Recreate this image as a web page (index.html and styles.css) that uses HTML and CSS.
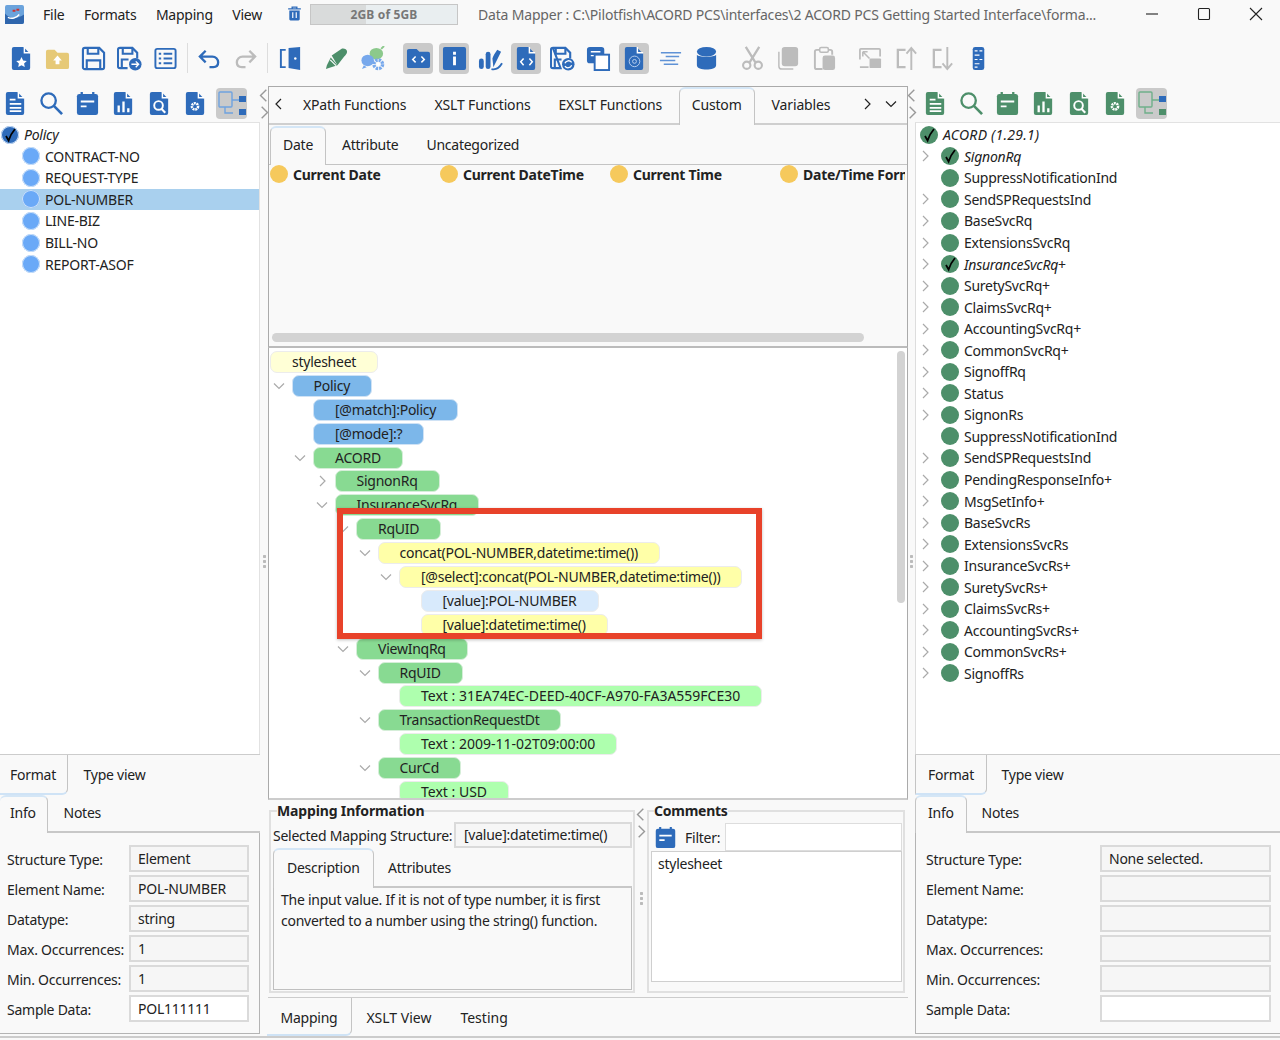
FILE: index.html
```html
<!DOCTYPE html>
<html lang="en">
<head>
    <meta charset="UTF-8">
    <title>Data Mapper</title>
    <link rel="stylesheet" href="styles.css">
</head>
<body>
    <svg class="defs" width="0" height="0">
        <symbol id="i-chev-r" viewBox="0 0 12 12"><path d="M4 1l5 5-5 5" fill="none" stroke="currentColor" stroke-width="1.2"/></symbol>
        <symbol id="i-chev-d" viewBox="0 0 12 12"><path d="M1 3.500l5 5 5-5" fill="none" stroke="currentColor" stroke-width="1.2"/></symbol>
        <symbol id="i-chev-l" viewBox="0 0 12 12"><path d="M8 1L3 6l5 5" fill="none" stroke="currentColor" stroke-width="1.2"/></symbol>
        <symbol id="i-check" viewBox="0 0 18 18"><path d="M5 10l2.600 4.500C9 10 11 6.500 14 3" fill="none" stroke="#000" stroke-width="1.800"/></symbol>

        <symbol id="i-file-star" viewBox="0 0 26 26"><path d="M5 1h10l7 7v15a2 2 0 0 1-2 2H5a2 2 0 0 1-2-2V3a2 2 0 0 1 2-2z" fill="currentColor"/><path d="M16 1v6h6" fill="none" stroke="#fff" stroke-width="1.500"/><path d="M13 11.500l1.700 3.500 3.800.5-2.800 2.600.7 3.800-3.400-1.800-3.400 1.800.7-3.800-2.800-2.600 3.800-.5z" fill="#fff"/></symbol>
        <symbol id="i-folder-up" viewBox="0 0 26 26"><path d="M1 6a2 2 0 0 1 2-2h7l3 3h10a2 2 0 0 1 2 2v13a2 2 0 0 1-2 2H3a2 2 0 0 1-2-2z" fill="#e6c977"/><path d="M13 10l4.500 5H15v4h-4v-4H8.500z" fill="#fff"/></symbol>
        <symbol id="i-save" viewBox="0 0 26 26"><path d="M4 2h15l5 5v15a2 2 0 0 1-2 2H4a2 2 0 0 1-2-2V4a2 2 0 0 1 2-2z" fill="none" stroke="currentColor" stroke-width="2.200"/><path d="M7 2v6h11V2M6 24v-9h14v9" fill="none" stroke="currentColor" stroke-width="2.200"/></symbol>
        <symbol id="i-save-as" viewBox="0 0 26 26"><path d="M3 2h13l5 5v6M11 23H3a2 2 0 0 1-2-2V4a2 2 0 0 1 2-2" fill="none" stroke="currentColor" stroke-width="2.200"/><path d="M6 2v6h10V2M5 23v-9h7" fill="none" stroke="currentColor" stroke-width="2.200"/><circle cx="19" cy="19" r="6.500" fill="currentColor"/><path d="M15 19h7M19.500 16l3 3-3 3" fill="none" stroke="#fff" stroke-width="1.400"/></symbol>
        <symbol id="i-save-sync" viewBox="0 0 26 26"><path d="M3 2h13l5 5v6M11 23H3a2 2 0 0 1-2-2V4a2 2 0 0 1 2-2z" fill="none" stroke="currentColor" stroke-width="2.200"/><path d="M6 2v6h10V2M5 23v-9h7" fill="none" stroke="currentColor" stroke-width="2.200"/><circle cx="19" cy="19" r="6.500" fill="currentColor"/><path d="M15.500 18a4 4 0 0 1 7-1M22.500 20a4 4 0 0 1-7 1" fill="none" stroke="#fff" stroke-width="1.300"/></symbol>
        <symbol id="i-list" viewBox="0 0 26 26"><rect x="2.500" y="3" width="21" height="20" rx="2" fill="none" stroke="currentColor" stroke-width="2"/><path d="M6 8h2.500M11 8h9M6 13h2.500M11 13h9M6 18h2.500M11 18h9" stroke="currentColor" stroke-width="2.200"/></symbol>
        <symbol id="i-undo" viewBox="0 0 26 26"><path d="M9 5L3 11l6 6M3 11h13a6 6 0 0 1 6 6c0 3-2 5-5 5h-4" fill="none" stroke="currentColor" stroke-width="2.400"/></symbol>
        <symbol id="i-redo" viewBox="0 0 26 26"><path d="M17 5l6 6-6 6M23 11H10a6 6 0 0 0-6 6c0 3 2 5 5 5h4" fill="none" stroke="currentColor" stroke-width="2.400"/></symbol>
        <symbol id="i-door" viewBox="0 0 26 26"><path d="M11 2l12-1v24l-12-2z" fill="currentColor"/><circle cx="18" cy="13" r="1.300" fill="#fff"/><path d="M8 4H3v18h5" fill="none" stroke="currentColor" stroke-width="2"/></symbol>
        <symbol id="i-pen" viewBox="0 0 26 26"><path d="M8 10L18 3c2-1 6 0 6 3 0 2-2 4-3 5l-7 9z" fill="#4d8f6a"/><path d="M7 12l7 8-9 3-3 1 1-4z" fill="#4d8f6a"/><path d="M6.500 14.500l6 6" stroke="#fff" stroke-width="1.200"/></symbol>
        <symbol id="i-group" viewBox="0 0 26 26"><ellipse cx="17" cy="8" rx="7" ry="6" fill="#8cc98c"/><path d="M22 3l3-3" stroke="#8cc98c" stroke-width="2"/><ellipse cx="8" cy="15" rx="6.500" ry="6" fill="#77a8ec"/><path d="M4 20l-2 4 5-2z" fill="#77a8ec"/><circle cx="19" cy="19" r="4.500" fill="none" stroke="#77a8ec" stroke-width="3.500" stroke-dasharray="2.500 1"/><circle cx="19" cy="19" r="1.500" fill="#fff"/></symbol>
        <symbol id="i-folder-code" viewBox="0 0 26 26"><path d="M1 5a2 2 0 0 1 2-2h8l3 3h9a2 2 0 0 1 2 2v13a2 2 0 0 1-2 2H3a2 2 0 0 1-2-2z" fill="currentColor"/><path d="M10 11l-3 3 3 3M16 11l3 3-3 3" fill="none" stroke="#fff" stroke-width="1.600"/></symbol>
        <symbol id="i-info" viewBox="0 0 26 26"><rect x="1" y="1" width="24" height="24" rx="2" fill="currentColor"/><path d="M11.500 6h3v3h-3zM11.500 11h3v9h-3z" fill="#fff"/></symbol>
        <symbol id="i-hand-chart" viewBox="0 0 26 26"><rect x="1" y="13" width="5" height="11" rx="2.500" fill="currentColor"/><rect x="8" y="6" width="5" height="18" rx="2.500" fill="currentColor"/><path d="M16 22L24 6l-4-2c-2 3-4 6-5 9z" fill="currentColor"/><path d="M14 24c4 1 8-1 11-6" fill="none" stroke="currentColor" stroke-width="2"/></symbol>
        <symbol id="i-file-code" viewBox="0 0 26 26"><path d="M5 1h10l7 7v15a2 2 0 0 1-2 2H5a2 2 0 0 1-2-2V3a2 2 0 0 1 2-2z" fill="currentColor"/><path d="M16 1v6h6" fill="none" stroke="#fff" stroke-width="1.500"/><path d="M10 13l-3 3.500 3 3.500M16 13l3 3.500-3 3.500" fill="none" stroke="#fff" stroke-width="1.600"/></symbol>
        <symbol id="i-copies" viewBox="0 0 26 26"><rect x="1" y="1" width="18" height="17" rx="3" fill="currentColor"/><path d="M5 6h10M5 10h7" stroke="#fff" stroke-width="1.500"/><rect x="9" y="9" width="15" height="16" fill="#fff" stroke="currentColor" stroke-width="2"/></symbol>
        <symbol id="i-file-at" viewBox="0 0 26 26"><path d="M5 1h10l7 7v15a2 2 0 0 1-2 2H5a2 2 0 0 1-2-2V3a2 2 0 0 1 2-2z" fill="currentColor"/><path d="M16 1v6h6" fill="none" stroke="#fff" stroke-width="1.500"/><circle cx="13" cy="16" r="5.500" fill="none" stroke="#b8cfee" stroke-width="1"/><circle cx="13" cy="16" r="2" fill="none" stroke="#b8cfee" stroke-width="1"/></symbol>
        <symbol id="i-lines" viewBox="0 0 26 26"><path d="M3 7h21M8 11h14M2 15h16M6 19h15" stroke="#5f92d6" stroke-width="1.500"/></symbol>
        <symbol id="i-db" viewBox="0 0 26 26"><ellipse cx="13" cy="6" rx="10" ry="5" fill="currentColor"/><path d="M3 9c2 3 18 3 20 0v11c0 6-20 6-20 0z" fill="currentColor"/></symbol>
        <symbol id="i-scissors" viewBox="0 0 26 26"><path d="M6 1l10 16M20 1L10 17" stroke="currentColor" stroke-width="2.400"/><circle cx="7" cy="20" r="3.800" fill="none" stroke="currentColor" stroke-width="2.200"/><circle cx="19" cy="20" r="3.800" fill="none" stroke="currentColor" stroke-width="2.200"/></symbol>
        <symbol id="i-copy" viewBox="0 0 26 26"><path d="M3 6v15a3 3 0 0 0 3 3h12" fill="none" stroke="currentColor" stroke-width="1.500"/><rect x="6" y="1" width="17" height="20" rx="3" fill="currentColor"/></symbol>
        <symbol id="i-paste" viewBox="0 0 26 26"><path d="M8 4H5a2 2 0 0 0-2 2v16a2 2 0 0 0 2 2h6" fill="none" stroke="currentColor" stroke-width="2"/><path d="M17 4h2a2 2 0 0 1 2 2v3" fill="none" stroke="currentColor" stroke-width="2"/><rect x="8" y="1.500" width="9" height="5" rx="1.500" fill="none" stroke="currentColor" stroke-width="1.600"/><rect x="11" y="10" width="13" height="15" rx="2.500" fill="currentColor"/></symbol>
        <symbol id="i-resize" viewBox="0 0 26 26"><path d="M2 14V4a1 1 0 0 1 1-1h19a1 1 0 0 1 1 1v7M2 22h9" fill="none" stroke="currentColor" stroke-width="1.800"/><rect x="12" y="13" width="12" height="10" rx="1" fill="currentColor"/><path d="M5 6l7 7M5 6h5M5 6v5" fill="none" stroke="currentColor" stroke-width="1.600"/></symbol>
        <symbol id="i-up" viewBox="0 0 26 26"><path d="M12 4H4v18h8" fill="none" stroke="currentColor" stroke-width="2.400"/><path d="M18 25V3M13 8l5-6 5 6" fill="none" stroke="currentColor" stroke-width="2"/></symbol>
        <symbol id="i-down" viewBox="0 0 26 26"><path d="M12 4H4v18h8" fill="none" stroke="currentColor" stroke-width="2.400"/><path d="M18 1v22M13 18l5 6 5-6" fill="none" stroke="currentColor" stroke-width="2"/></symbol>
        <symbol id="i-ruler" viewBox="0 0 26 26"><rect x="7" y="1" width="12" height="24" rx="2.500" fill="currentColor"/><path d="M9 5h3M14 5h3M9 9.500h5M9 14h3M14 14h3M9 18.500h5M9 22h3" stroke="#fff" stroke-width="1.200"/></symbol>
        <symbol id="i-trash" viewBox="0 0 26 26"><path d="M2 5h22M9 5V2h8v3" fill="none" stroke="currentColor" stroke-width="2.400"/><path d="M4 8h18v15a2 2 0 0 1-2 2H6a2 2 0 0 1-2-2z" fill="currentColor"/><path d="M10 11v10M16 11v10" stroke="#fff" stroke-width="2"/></symbol>
        <symbol id="i-logo" viewBox="0 0 20 20"><rect width="20" height="20" rx="2" fill="#6ba3dc"/><path d="M0 20V9c5 6 13 6 20 1v8a2 2 0 0 1-2 2z" fill="#2f66ad"/><path d="M3 13c4 2 9 1 12-3" fill="none" stroke="#fff" stroke-width="1.500"/><path d="M8 6h3M12 5h3" stroke="#c33" stroke-width="2"/></symbol>

        <symbol id="i-file-lines" viewBox="0 0 26 26"><path d="M5 1h10l7 7v15a2 2 0 0 1-2 2H5a2 2 0 0 1-2-2V3a2 2 0 0 1 2-2z" fill="currentColor"/><path d="M16 1v6h6" fill="none" stroke="#fff" stroke-width="1.500"/><path d="M7 9h6M7 13.500h12M7 17.500h12M7 21h12" stroke="#fff" stroke-width="1.800"/></symbol>
        <symbol id="i-search" viewBox="0 0 26 26"><circle cx="10" cy="10" r="7.500" fill="none" stroke="currentColor" stroke-width="2.400"/><path d="M15.500 15.500L24 24" stroke="currentColor" stroke-width="2.800"/></symbol>
        <symbol id="i-note" viewBox="0 0 26 26"><rect x="2" y="3" width="22" height="22" rx="2.500" fill="currentColor"/><path d="M7 1v4M19 1v4" stroke="currentColor" stroke-width="2.400"/><path d="M6 11h14M6 16h6" stroke="#fff" stroke-width="2"/></symbol>
        <symbol id="i-file-chart" viewBox="0 0 26 26"><path d="M5 1h10l7 7v15a2 2 0 0 1-2 2H5a2 2 0 0 1-2-2V3a2 2 0 0 1 2-2z" fill="currentColor"/><path d="M16 1v6h6" fill="none" stroke="#fff" stroke-width="1.500"/><path d="M8 22v-7M13 22V11M18 22v-4" stroke="#fff" stroke-width="2.400"/></symbol>
        <symbol id="i-file-search" viewBox="0 0 26 26"><path d="M5 1h10l7 7v15a2 2 0 0 1-2 2H5a2 2 0 0 1-2-2V3a2 2 0 0 1 2-2z" fill="currentColor"/><path d="M16 1v6h6" fill="none" stroke="#fff" stroke-width="1.500"/><circle cx="12" cy="15" r="4.500" fill="none" stroke="#fff" stroke-width="2"/><path d="M15 18.500l4 4" stroke="#fff" stroke-width="2.200"/></symbol>
        <symbol id="i-file-gear" viewBox="0 0 26 26"><path d="M5 1h10l7 7v15a2 2 0 0 1-2 2H5a2 2 0 0 1-2-2V3a2 2 0 0 1 2-2z" fill="currentColor"/><path d="M16 1v6h6" fill="none" stroke="#fff" stroke-width="1.500"/><circle cx="12.500" cy="16" r="3.200" fill="none" stroke="#fff" stroke-width="2.600" stroke-dasharray="2 .7"/></symbol>
        <symbol id="i-map-blue" viewBox="0 0 30 30"><rect x="2" y="4" width="13" height="15" rx="1" fill="none" stroke="#6fa3e0" stroke-width="1.400"/><path d="M8 19v6h8M15 12h8" fill="none" stroke="#6fa3e0" stroke-width="1.400"/><rect x="22" y="8" width="7" height="6" fill="#2e6bba"/><rect x="22" y="21" width="7" height="6" fill="#2e6bba"/></symbol>
        <symbol id="i-map-green" viewBox="0 0 30 30"><rect x="2" y="4" width="13" height="15" rx="1" fill="none" stroke="#6fb08a" stroke-width="1.400"/><path d="M8 19v6h8M15 12h8" fill="none" stroke="#6fb08a" stroke-width="1.400"/><rect x="22" y="8" width="7" height="6" fill="#2e6bba"/><rect x="22" y="21" width="7" height="6" fill="#4d8f6a"/></symbol>
    </svg>

    <div class="app">
        <header class="titlebar">
            <svg class="logo"><use href="#i-logo"/></svg>
            <nav class="menu">
                <span>File</span>
                <span>Formats</span>
                <span>Mapping</span>
                <span>View</span>
            </nav>
            <svg class="trash"><use href="#i-trash"/></svg>
            <div class="memory"><div class="memory-used"></div><span>2GB of 5GB</span></div>
            <div class="doc-title">Data Mapper : C:\Pilotfish\ACORD PCS\interfaces\2 ACORD PCS Getting Started Interface\forma...</div>
            <div class="win-buttons">
                <svg viewBox="0 0 14 14"><path d="M1 7h12" stroke="#222" stroke-width="1.100"/></svg>
                <svg viewBox="0 0 14 14"><rect x="1.500" y="1.500" width="11" height="11" rx="1" fill="none" stroke="#222" stroke-width="1.100"/></svg>
                <svg viewBox="0 0 14 14"><path d="M1 1l12 12M13 1L1 13" stroke="#222" stroke-width="1.100"/></svg>
            </div>
        </header>

        <div class="toolbar">
            <button class="tb"><svg><use href="#i-file-star"/></svg></button>
            <button class="tb"><svg><use href="#i-folder-up"/></svg></button>
            <button class="tb"><svg><use href="#i-save"/></svg></button>
            <button class="tb"><svg><use href="#i-save-as"/></svg></button>
            <button class="tb"><svg><use href="#i-list"/></svg></button>
            <span class="sep"></span>
            <button class="tb"><svg><use href="#i-undo"/></svg></button>
            <button class="tb off"><svg><use href="#i-redo"/></svg></button>
            <span class="sep wide"></span>
            <button class="tb"><svg><use href="#i-door"/></svg></button>
            <span class="space"></span>
            <button class="tb"><svg><use href="#i-pen"/></svg></button>
            <button class="tb"><svg><use href="#i-group"/></svg></button>
            <span class="space"></span>
            <button class="tb on"><svg><use href="#i-folder-code"/></svg></button>
            <button class="tb on"><svg><use href="#i-info"/></svg></button>
            <button class="tb"><svg><use href="#i-hand-chart"/></svg></button>
            <button class="tb on"><svg><use href="#i-file-code"/></svg></button>
            <button class="tb"><svg><use href="#i-save-sync"/></svg></button>
            <button class="tb"><svg><use href="#i-copies"/></svg></button>
            <button class="tb on"><svg><use href="#i-file-at"/></svg></button>
            <button class="tb"><svg><use href="#i-lines"/></svg></button>
            <button class="tb"><svg><use href="#i-db"/></svg></button>
            <span class="space"></span>
            <button class="tb off"><svg><use href="#i-scissors"/></svg></button>
            <button class="tb off"><svg><use href="#i-copy"/></svg></button>
            <button class="tb off"><svg><use href="#i-paste"/></svg></button>
            <span class="space"></span>
            <button class="tb off"><svg><use href="#i-resize"/></svg></button>
            <button class="tb off"><svg><use href="#i-up"/></svg></button>
            <button class="tb off"><svg><use href="#i-down"/></svg></button>
            <button class="tb"><svg><use href="#i-ruler"/></svg></button>
        </div>

        <main class="main">
            <!-- source structure -->
            <section class="side">
                <div class="pane-tools">
                    <button class="tb"><svg><use href="#i-file-lines"/></svg></button>
                    <button class="tb"><svg><use href="#i-search"/></svg></button>
                    <button class="tb"><svg><use href="#i-note"/></svg></button>
                    <button class="tb"><svg><use href="#i-file-chart"/></svg></button>
                    <button class="tb"><svg><use href="#i-file-search"/></svg></button>
                    <button class="tb"><svg><use href="#i-file-gear"/></svg></button>
                    <button class="tb on"><svg class="map"><use href="#i-map-blue"/></svg></button>
                </div>
                <ul class="struct struct-left">
                    <li class="node root"><span class="dot dark"><svg><use href="#i-check"/></svg></span><i>Policy</i></li>
                    <li class="node"><span class="dot"></span>CONTRACT-NO</li>
                    <li class="node"><span class="dot"></span>REQUEST-TYPE</li>
                    <li class="node selected"><span class="dot"></span>POL-NUMBER</li>
                    <li class="node"><span class="dot"></span>LINE-BIZ</li>
                    <li class="node"><span class="dot"></span>BILL-NO</li>
                    <li class="node"><span class="dot"></span>REPORT-ASOF</li>
                </ul>
                <div class="tabs tabs-low">
                    <span class="tab on-low">Format</span>
                    <span class="tab">Type view</span>
                </div>
                <div class="tabs tabs-info">
                    <span class="tab on">Info</span>
                    <span class="tab">Notes</span>
                </div>
                <div class="props">
                    <label>Structure Type:</label><div class="field">Element</div>
                    <label>Element Name:</label><div class="field">POL-NUMBER</div>
                    <label>Datatype:</label><div class="field">string</div>
                    <label>Max. Occurrences:</label><div class="field">1</div>
                    <label>Min. Occurrences:</label><div class="field">1</div>
                    <label>Sample Data:</label><div class="field edit">POL111111</div>
                </div>
            </section>

            <div class="gutter">
                <svg><use href="#i-chev-l"/></svg>
                <svg><use href="#i-chev-r"/></svg>
                <span class="grip"></span>
            </div>

            <!-- mapping -->
            <section class="center">
                <div class="functions">
                    <div class="tabs tabs-func">
                        <svg class="tab-arrow first"><use href="#i-chev-l"/></svg>
                        <span class="tab">XPath Functions</span>
                        <span class="tab">XSLT Functions</span>
                        <span class="tab">EXSLT Functions</span>
                        <span class="tab on">Custom</span>
                        <span class="tab">Variables</span>
                        <svg class="tab-arrow next"><use href="#i-chev-r"/></svg>
                        <svg class="tab-arrow"><use href="#i-chev-d"/></svg>
                    </div>
                    <div class="tabs tabs-sub">
                        <span class="tab on">Date</span>
                        <span class="tab">Attribute</span>
                        <span class="tab">Uncategorized</span>
                    </div>
                    <div class="func-list">
                        <div class="func"><span class="dot amber"></span>Current Date</div>
                        <div class="func"><span class="dot amber"></span>Current DateTime</div>
                        <div class="func"><span class="dot amber"></span>Current Time</div>
                        <div class="func"><span class="dot amber"></span>Date/Time Format</div>
                    </div>
                    <div class="hscroll"><div class="thumb"></div></div>
                </div>

                <div class="xslt">
                    <div class="row d0"><span class="pill cream">stylesheet</span></div>
                    <div class="row d0"><svg class="twist"><use href="#i-chev-d"/></svg><span class="pill blue">Policy</span></div>
                    <div class="row d1"><svg class="twist none"></svg><span class="pill blue">[@match]:Policy</span></div>
                    <div class="row d1"><svg class="twist none"></svg><span class="pill blue">[@mode]:?</span></div>
                    <div class="row d1"><svg class="twist"><use href="#i-chev-d"/></svg><span class="pill green">ACORD</span></div>
                    <div class="row d2"><svg class="twist"><use href="#i-chev-r"/></svg><span class="pill green">SignonRq</span></div>
                    <div class="row d2"><svg class="twist"><use href="#i-chev-d"/></svg><span class="pill green">InsuranceSvcRq</span></div>
                    <div class="row d3"><svg class="twist"><use href="#i-chev-d"/></svg><span class="pill green">RqUID</span></div>
                    <div class="row d4"><svg class="twist"><use href="#i-chev-d"/></svg><span class="pill yellow">concat(POL-NUMBER,datetime:time())</span></div>
                    <div class="row d5"><svg class="twist"><use href="#i-chev-d"/></svg><span class="pill yellow">[@select]:concat(POL-NUMBER,datetime:time())</span></div>
                    <div class="row d6"><svg class="twist none"></svg><span class="pill sky">[value]:POL-NUMBER</span></div>
                    <div class="row d6"><svg class="twist none"></svg><span class="pill yellow">[value]:datetime:time()</span></div>
                    <div class="row d3"><svg class="twist"><use href="#i-chev-d"/></svg><span class="pill green">ViewInqRq</span></div>
                    <div class="row d4"><svg class="twist"><use href="#i-chev-d"/></svg><span class="pill green">RqUID</span></div>
                    <div class="row d5"><svg class="twist none"></svg><span class="pill mint">Text : 31EA74EC-DEED-40CF-A970-FA3A559FCE30</span></div>
                    <div class="row d4"><svg class="twist"><use href="#i-chev-d"/></svg><span class="pill green">TransactionRequestDt</span></div>
                    <div class="row d5"><svg class="twist none"></svg><span class="pill mint">Text : 2009-11-02T09:00:00</span></div>
                    <div class="row d4"><svg class="twist"><use href="#i-chev-d"/></svg><span class="pill green">CurCd</span></div>
                    <div class="row d5"><svg class="twist none"></svg><span class="pill mint">Text : USD</span></div>
                    <div class="vscroll"></div>
                    <div class="highlight"></div>
                </div>

                <div class="details">
                    <fieldset class="group group-map">
                        <legend>Mapping Information</legend>
                        <div class="selected-line">
                            <label>Selected Mapping Structure:</label>
                            <div class="field">[value]:datetime:time()</div>
                        </div>
                        <div class="tabs tabs-desc">
                            <span class="tab on">Description</span>
                            <span class="tab">Attributes</span>
                        </div>
                        <div class="desc">The input value. If it is not of type number, it is first converted to a number using the string() function.</div>
                    </fieldset>
                    <div class="mini-gutter">
                        <svg><use href="#i-chev-l"/></svg>
                        <svg><use href="#i-chev-r"/></svg>
                        <span class="grip"></span>
                    </div>
                    <fieldset class="group group-notes">
                        <legend>Comments</legend>
                        <div class="filter-line">
                            <svg class="filter-icon"><use href="#i-note"/></svg>
                            <label>Filter:</label>
                            <div class="filter-input"></div>
                        </div>
                        <div class="comment-box">stylesheet</div>
                    </fieldset>
                </div>

                <div class="tabs tabs-bottom">
                    <span class="tab on-low">Mapping</span>
                    <span class="tab">XSLT View</span>
                    <span class="tab">Testing</span>
                </div>
            </section>

            <div class="gutter">
                <svg><use href="#i-chev-l"/></svg>
                <svg><use href="#i-chev-r"/></svg>
                <span class="grip"></span>
            </div>

            <!-- target structure -->
            <section class="side side-right">
                <div class="pane-tools green-tools">
                    <button class="tb"><svg><use href="#i-file-lines"/></svg></button>
                    <button class="tb"><svg><use href="#i-search"/></svg></button>
                    <button class="tb"><svg><use href="#i-note"/></svg></button>
                    <button class="tb"><svg><use href="#i-file-chart"/></svg></button>
                    <button class="tb"><svg><use href="#i-file-search"/></svg></button>
                    <button class="tb"><svg><use href="#i-file-gear"/></svg></button>
                    <button class="tb on"><svg class="map"><use href="#i-map-green"/></svg></button>
                </div>
                <ul class="struct struct-right">
                    <li class="node root"><span class="dot teal"><svg><use href="#i-check"/></svg></span><i>ACORD (1.29.1)</i></li>
                    <li class="node"><svg class="twist"><use href="#i-chev-r"/></svg><span class="dot teal"><svg><use href="#i-check"/></svg></span><i>SignonRq</i></li>
                    <li class="node"><svg class="twist none"></svg><span class="dot teal"></span>SuppressNotificationInd</li>
                    <li class="node"><svg class="twist"><use href="#i-chev-r"/></svg><span class="dot teal"></span>SendSPRequestsInd</li>
                    <li class="node"><svg class="twist"><use href="#i-chev-r"/></svg><span class="dot teal"></span>BaseSvcRq</li>
                    <li class="node"><svg class="twist"><use href="#i-chev-r"/></svg><span class="dot teal"></span>ExtensionsSvcRq</li>
                    <li class="node"><svg class="twist"><use href="#i-chev-r"/></svg><span class="dot teal"><svg><use href="#i-check"/></svg></span><i>InsuranceSvcRq</i>+</li>
                    <li class="node"><svg class="twist"><use href="#i-chev-r"/></svg><span class="dot teal"></span>SuretySvcRq+</li>
                    <li class="node"><svg class="twist"><use href="#i-chev-r"/></svg><span class="dot teal"></span>ClaimsSvcRq+</li>
                    <li class="node"><svg class="twist"><use href="#i-chev-r"/></svg><span class="dot teal"></span>AccountingSvcRq+</li>
                    <li class="node"><svg class="twist"><use href="#i-chev-r"/></svg><span class="dot teal"></span>CommonSvcRq+</li>
                    <li class="node"><svg class="twist"><use href="#i-chev-r"/></svg><span class="dot teal"></span>SignoffRq</li>
                    <li class="node"><svg class="twist"><use href="#i-chev-r"/></svg><span class="dot teal"></span>Status</li>
                    <li class="node"><svg class="twist"><use href="#i-chev-r"/></svg><span class="dot teal"></span>SignonRs</li>
                    <li class="node"><svg class="twist none"></svg><span class="dot teal"></span>SuppressNotificationInd</li>
                    <li class="node"><svg class="twist"><use href="#i-chev-r"/></svg><span class="dot teal"></span>SendSPRequestsInd</li>
                    <li class="node"><svg class="twist"><use href="#i-chev-r"/></svg><span class="dot teal"></span>PendingResponseInfo+</li>
                    <li class="node"><svg class="twist"><use href="#i-chev-r"/></svg><span class="dot teal"></span>MsgSetInfo+</li>
                    <li class="node"><svg class="twist"><use href="#i-chev-r"/></svg><span class="dot teal"></span>BaseSvcRs</li>
                    <li class="node"><svg class="twist"><use href="#i-chev-r"/></svg><span class="dot teal"></span>ExtensionsSvcRs</li>
                    <li class="node"><svg class="twist"><use href="#i-chev-r"/></svg><span class="dot teal"></span>InsuranceSvcRs+</li>
                    <li class="node"><svg class="twist"><use href="#i-chev-r"/></svg><span class="dot teal"></span>SuretySvcRs+</li>
                    <li class="node"><svg class="twist"><use href="#i-chev-r"/></svg><span class="dot teal"></span>ClaimsSvcRs+</li>
                    <li class="node"><svg class="twist"><use href="#i-chev-r"/></svg><span class="dot teal"></span>AccountingSvcRs+</li>
                    <li class="node"><svg class="twist"><use href="#i-chev-r"/></svg><span class="dot teal"></span>CommonSvcRs+</li>
                    <li class="node"><svg class="twist"><use href="#i-chev-r"/></svg><span class="dot teal"></span>SignoffRs</li>
                </ul>
                <div class="tabs tabs-low">
                    <span class="tab on-low">Format</span>
                    <span class="tab">Type view</span>
                </div>
                <div class="tabs tabs-info">
                    <span class="tab on">Info</span>
                    <span class="tab">Notes</span>
                </div>
                <div class="props">
                    <label>Structure Type:</label><div class="field">None selected.</div>
                    <label>Element Name:</label><div class="field"></div>
                    <label>Datatype:</label><div class="field"></div>
                    <label>Max. Occurrences:</label><div class="field"></div>
                    <label>Min. Occurrences:</label><div class="field"></div>
                    <label>Sample Data:</label><div class="field edit"></div>
                </div>
            </section>
        </main>
    </div>
</body>
</html>
```

FILE: styles.css
```css
* {
    box-sizing: border-box;
}

body {
    margin: 0;
    background: #f9f9f9;
    font-family: "Noto Sans", Arial, sans-serif;
    font-size: 14px;
    letter-spacing: -0.25px;
    color: #222;
}

.defs {
    position: absolute;
}

.app {
    width: 1280px;
    height: 1040px;
    overflow: hidden;
    display: flex;
    flex-direction: column;
}

/* title bar */
.titlebar {
    height: 30px;
    padding-bottom: 2px;
    display: flex;
    align-items: center;
}

.logo {
    width: 19px;
    height: 19px;
    margin-left: 5px;
}

.menu {
    display: flex;
    gap: 19.5px;
    margin-left: 19px;
    width: 240px;
}

.trash {
    width: 15px;
    height: 15px;
    margin: -2px 0 0 4px;
    color: #2e6bba;
}

.memory {
    position: relative;
    width: 148px;
    height: 21px;
    margin: 1px 0 0 8px;
    border: 1px solid #c6c6c6;
    background: #e9eef0;
    text-align: center;
    font-size: 12px;
    font-weight: bold;
    letter-spacing: 0.15px;
    line-height: 19px;
    color: #777;
}

.memory-used {
    position: absolute;
    left: 0;
    top: 0;
    bottom: 0;
    width: 55px;
    background: #d9dbdb;
}

.memory span {
    position: relative;
}

.doc-title {
    margin-left: 20px;
    color: #666;
    letter-spacing: -0.185px;
    white-space: nowrap;
    flex: 1;
}

.win-buttons {
    display: flex;
    gap: 38px;
    padding-right: 17px;
}

.win-buttons svg {
    width: 14px;
    height: 14px;
}

/* toolbars */
.toolbar {
    height: 54px;
    padding: 2px 0 0 3.5px;
    display: flex;
    align-items: center;
    color: #2e6bba;
}

.tb {
    flex: none;
    width: 30px;
    height: 31px;
    margin: 0 3px;
    padding: 0;
    border: 0;
    border-radius: 4px;
    background: none;
    color: #2e6bba;
    display: flex;
    align-items: center;
    justify-content: center;
}

.tb svg {
    width: 25px;
    height: 25px;
}

.tb.on {
    background: #cacaca;
}

.tb.off {
    color: #bcbcbc;
}

.sep {
    flex: none;
    width: 7.5px;
    height: 30px;
    border-right: 1px solid #ddd;
    transform: translateX(-3px);
}

.sep.wide {
    width: 9px;
    transform: translateX(-4px);
}

.space {
    flex: none;
    width: 10px;
}

.pane-tools {
    height: 38px;
    flex: none;
    display: flex;
    align-items: center;
    gap: 6px;
}

.pane-tools .tb {
    margin: 0;
}

.pane-tools .tb.on {
    width: 31px;
}

.pane-tools .map {
    width: 30px;
    height: 30px;
}

.green-tools {
    padding-left: 5px;
}

.green-tools .tb {
    color: #4d8f6a;
}

/* main layout */
.main {
    flex: 1;
    min-height: 0;
    margin-bottom: 2px;
    border-bottom: 2px solid #ccc;
    display: grid;
    grid-template-columns: 260px 8px 640px 7px 365px;
}

.side,
.center {
    min-width: 0;
    min-height: 0;
    display: flex;
    flex-direction: column;
}

.gutter {
    display: flex;
    flex-direction: column;
    align-items: center;
    color: #999;
    padding-top: 3px;
}

.gutter svg,
.mini-gutter svg {
    width: 14px;
    height: 17px;
    flex: none;
}

.gutter .grip,
.mini-gutter .grip {
    width: 3px;
    height: 14px;
    background: radial-gradient(circle, #bbb 1.4px, transparent 1.5px) 0 0 / 3px 5px;
}

.gutter .grip {
    margin-top: 433px;
}

/* structure trees */
.struct {
    flex: 1;
    min-height: 0;
    margin: 0;
    padding: 1px 0 0;
    list-style: none;
    background: #fff;
    border-top: 1px solid #e2e2e2;
    border-right: 1px solid #e2e2e2;
    overflow: hidden;
}

.struct-right {
    border-right: 0;
    border-left: 1px solid #ddd;
}

.struct-right .root i {
    letter-spacing: 0.25px;
}

.node {
    height: 21.56px;
    display: flex;
    align-items: center;
    white-space: nowrap;
    padding-left: 22px;
}

.struct-right .node {
    padding-left: 3px;
}

.node.root {
    padding-left: 1px;
}

.struct-right .node.root {
    padding-left: 4px;
}

.node.selected {
    background: #a9d0ee;
}

.dot {
    flex: none;
    width: 18px;
    height: 18px;
    margin-right: 5px;
    border-radius: 50%;
    background: #6aa9f7;
    box-shadow: 0 0 0 1px #cfe2f8 inset;
}

.dot svg {
    display: block;
    width: 18px;
    height: 18px;
}

.dot.dark {
    background: #2e6bba;
}

.dot.teal {
    background: #4d8f6a;
    box-shadow: none;
}

.dot.amber {
    background: #f6c95c;
    box-shadow: none;
}

.struct-right .node .twist {
    width: 12px;
    height: 12px;
    margin: 0 10px 0 0;
    color: #aaa;
}

/* tabs */
.tabs {
    flex: none;
    display: flex;
    align-items: stretch;
}

.tab {
    display: flex;
    align-items: center;
    padding: 0 14.5px 2px;
    white-space: nowrap;
}

.tab.on {
    padding-bottom: 6px;
    background: #f9f9f9;
    border: 1px solid #c4c4c4;
    border-bottom: 0;
    border-top: 2px solid #d4e6f6;
    border-radius: 6px 6px 0 0;
    margin-bottom: -2px;
    position: relative;
}

.tab.on-low {
    padding-bottom: 0;
    border-right: 1px solid #c4c4c4;
    border-bottom: 2px solid #cfe3f6;
    border-radius: 0 0 6px 0;
    background: #f9f9f9;
}

.tabs-low {
    height: 41px;
    border-top: 1px solid #ccc;
}

.tabs-low .tab.on-low {
    width: 68px;
    margin-right: 1px;
    padding-left: 10px;
    padding-right: 0;
}

.side-right .tabs-low .tab.on-low {
    width: 72px;
    margin-right: 0;
    padding-left: 12px;
    border-left: 1px solid #c4c4c4;
}

.tabs-info {
    height: 38px;
    border-bottom: 2px solid #c8c8c8;
}

.tabs-info .tab.on {
    width: 48px;
    margin-right: 1px;
    padding-left: 10px;
    padding-right: 0;
    border-left: 0;
}

.side-right .tabs-info .tab.on {
    width: 52px;
    margin-right: 0;
    padding-left: 12px;
    border-left: 1px solid #c4c4c4;
}

.tabs-func {
    height: 38px;
    border-bottom: 2px solid #cfcfcf;
    padding-left: 3.5px;
    letter-spacing: -0.15px;
}

.tabs-func .tab {
    padding-left: 14px;
    padding-right: 14px;
}

.tab-arrow {
    width: 12px;
    height: 12px;
    align-self: center;
    margin-top: -2px;
    color: #222;
    flex: none;
}

.tab-arrow.first {
    margin-right: 4.5px;
}

.tab-arrow.next {
    margin-left: 17px;
    margin-right: 12px;
}

.tabs-func .tab.on {
    padding-left: 12px;
    padding-right: 12px;
    margin-left: 2.5px;
    margin-right: 3px;
}

.tabs-sub {
    height: 39px;
    margin-top: 1px;
    border-bottom: 1px solid #c4c4c4;
}

.tabs-sub .tab {
    padding-left: 14px;
    padding-right: 14px;
}

.tabs-sub .tab.on {
    margin: 0 2px -1px 1px;
    padding-left: 12px;
    padding-right: 12px;
    padding-bottom: 5px;
}

.tabs-bottom {
    height: 39px;
    margin-top: 4px;
    border-top: 1px solid #ccc;
    letter-spacing: 0;
}

.tabs-bottom .tab {
    padding-bottom: 0;
}

.tabs-bottom .tab.on-low {
    padding-left: 13.5px;
    padding-right: 13.5px;
    padding-top: 2px;
    margin-left: -1px;
    letter-spacing: -0.25px;
}

/* properties form */
.props {
    height: 201px;
    margin-bottom: 2px;
    border: 1px solid #b4b4b4;
    border-left: 0;
    border-top: 0;
    padding: 12px 11px 0 7px;
    display: grid;
    grid-template-columns: 122px 120px;
    grid-auto-rows: 27px;
    row-gap: 3px;
    align-items: center;
}

.props label {
    padding-top: 1px;
}

.side-right .props {
    border-left: 1px solid #b4b4b4;
    border-right: 0;
    padding: 12px 11px 0 10px;
    grid-template-columns: 174px 171px;
}

.field {
    height: 27px;
    padding: 0 7px;
    border: 2px solid #dadada;
    background: #f6f6f6;
    line-height: 24px;
    white-space: nowrap;
}

.field.edit {
    background: #fff;
}

/* function list */
.center {
    position: relative;
}

.functions {
    flex: none;
    height: 262px;
    margin-top: 2px;
    border: 1px solid #aaa;
    border-bottom: 2px solid #bbb;
    display: flex;
    flex-direction: column;
}

.func-list {
    flex: 1;
    display: flex;
    overflow: hidden;
    padding-left: 1px;
    margin-right: 2px;
}

.func {
    flex: none;
    width: 170px;
    height: 20px;
    margin-top: -1px;
    display: flex;
    align-items: center;
    font-weight: bold;
    white-space: nowrap;
}

.hscroll {
    flex: none;
    height: 16px;
    padding: 3px 3px 4px;
}

.thumb {
    width: 592px;
    height: 9px;
    border-radius: 5px;
    background: #d3d3d3;
}

/* xslt tree */
.xslt {
    position: relative;
    flex: 1;
    min-height: 0;
    overflow: hidden;
    background: #fff;
    border-left: 1px solid #aaa;
    border-right: 1px solid #aaa;
    border-bottom: 2px solid #ccc;
    padding: 2px 0 0 1px;
}

.row {
    height: 23.9px;
    display: flex;
    align-items: center;
}

.d1 { padding-left: 21.5px; }
.d2 { padding-left: 43px; }
.d3 { padding-left: 64.5px; }
.d4 { padding-left: 86px; }
.d5 { padding-left: 107.5px; }
.d6 { padding-left: 129px; }

.twist {
    flex: none;
    width: 12px;
    height: 12px;
    margin: 0 7px 0 2.5px;
    color: #aaa;
}

.twist.none {
    visibility: hidden;
}

.pill {
    height: 22px;
    padding: 0 21px;
    border: 1px solid #ececec;
    border-radius: 7px;
    line-height: 20px;
    white-space: nowrap;
}

.cream { background: #ffffd6; }
.blue { background: #7cb7ea; border-color: #cfe2f5; }
.green { background: #88da92; border-color: #d5eed8; }
.yellow { background: #ffffa8; }
.sky { background: #d8eafc; }
.mint { background: #aeffae; letter-spacing: 0; }

.vscroll {
    position: absolute;
    right: 2px;
    top: 3px;
    width: 8px;
    height: 252px;
    border-radius: 4px;
    background: #d3d3d3;
}

.highlight {
    position: absolute;
    left: 68px;
    top: 160px;
    width: 425px;
    height: 131px;
    border: 6px solid #e8422a;
    box-shadow: 0 1px 3px rgba(0,0,0,0.25);
}

/* mapping details */
.details {
    flex: none;
    height: 193px;
    display: flex;
    padding: 1px 3px 0 1px;
}

.group {
    margin: 0;
    padding: 0;
    min-width: 0;
    border: 2px solid #e0e0e0;
    height: 192px;
}

.group legend {
    padding: 0;
    font-weight: bold;
    line-height: 20px;
}

.group-map {
    width: 366px;
    padding: 0 1px 0 2px;
}

.group-map legend {
    margin-left: 4px;
    letter-spacing: -0.15px;
}

.group-notes {
    width: 258px;
    padding: 0 1px 0 2px;
}

.group-notes legend {
    margin-left: 3px;
}

.selected-line {
    display: flex;
    align-items: center;
    height: 26px;
    margin-top: 1px;
}

.selected-line label {
    width: 181px;
    flex: none;
}

.selected-line .field {
    flex: 1;
    height: 26px;
    padding: 0 8px;
    line-height: 22px;
}

.tabs-desc {
    height: 40px;
    border-bottom: 2px solid #c8c8c8;
}

.tabs-desc .tab {
    padding-bottom: 0;
}

.tabs-desc .tab.on {
    padding-left: 13px;
    padding-right: 13px;
    padding-bottom: 4px;
}

.desc {
    height: 102px;
    padding: 2px 7px;
    border: 1px solid #c0c0c0;
    border-top: 0;
    line-height: 20.5px;
}

.mini-gutter {
    width: 12px;
    display: flex;
    flex-direction: column;
    align-items: center;
    padding-top: 5px;
    color: #999;
    flex: none;
}

.mini-gutter .grip {
    margin-top: 51px;
}

.filter-line {
    display: flex;
    align-items: center;
    height: 28px;
    margin-top: 2px;
}

.filter-icon {
    width: 23px;
    height: 25px;
    color: #2e6bba;
    margin-left: 3px;
    flex: none;
}

.filter-line label {
    margin-left: 8px;
    width: 40px;
    flex: none;
}

.filter-input {
    flex: 1;
    height: 28px;
    background: #fff;
    border: 1px solid #ddd;
}

.comment-box {
    height: 131px;
    padding: 2px 6px;
    background: #fff;
    border: 1px solid #cfcfcf;
}
```
